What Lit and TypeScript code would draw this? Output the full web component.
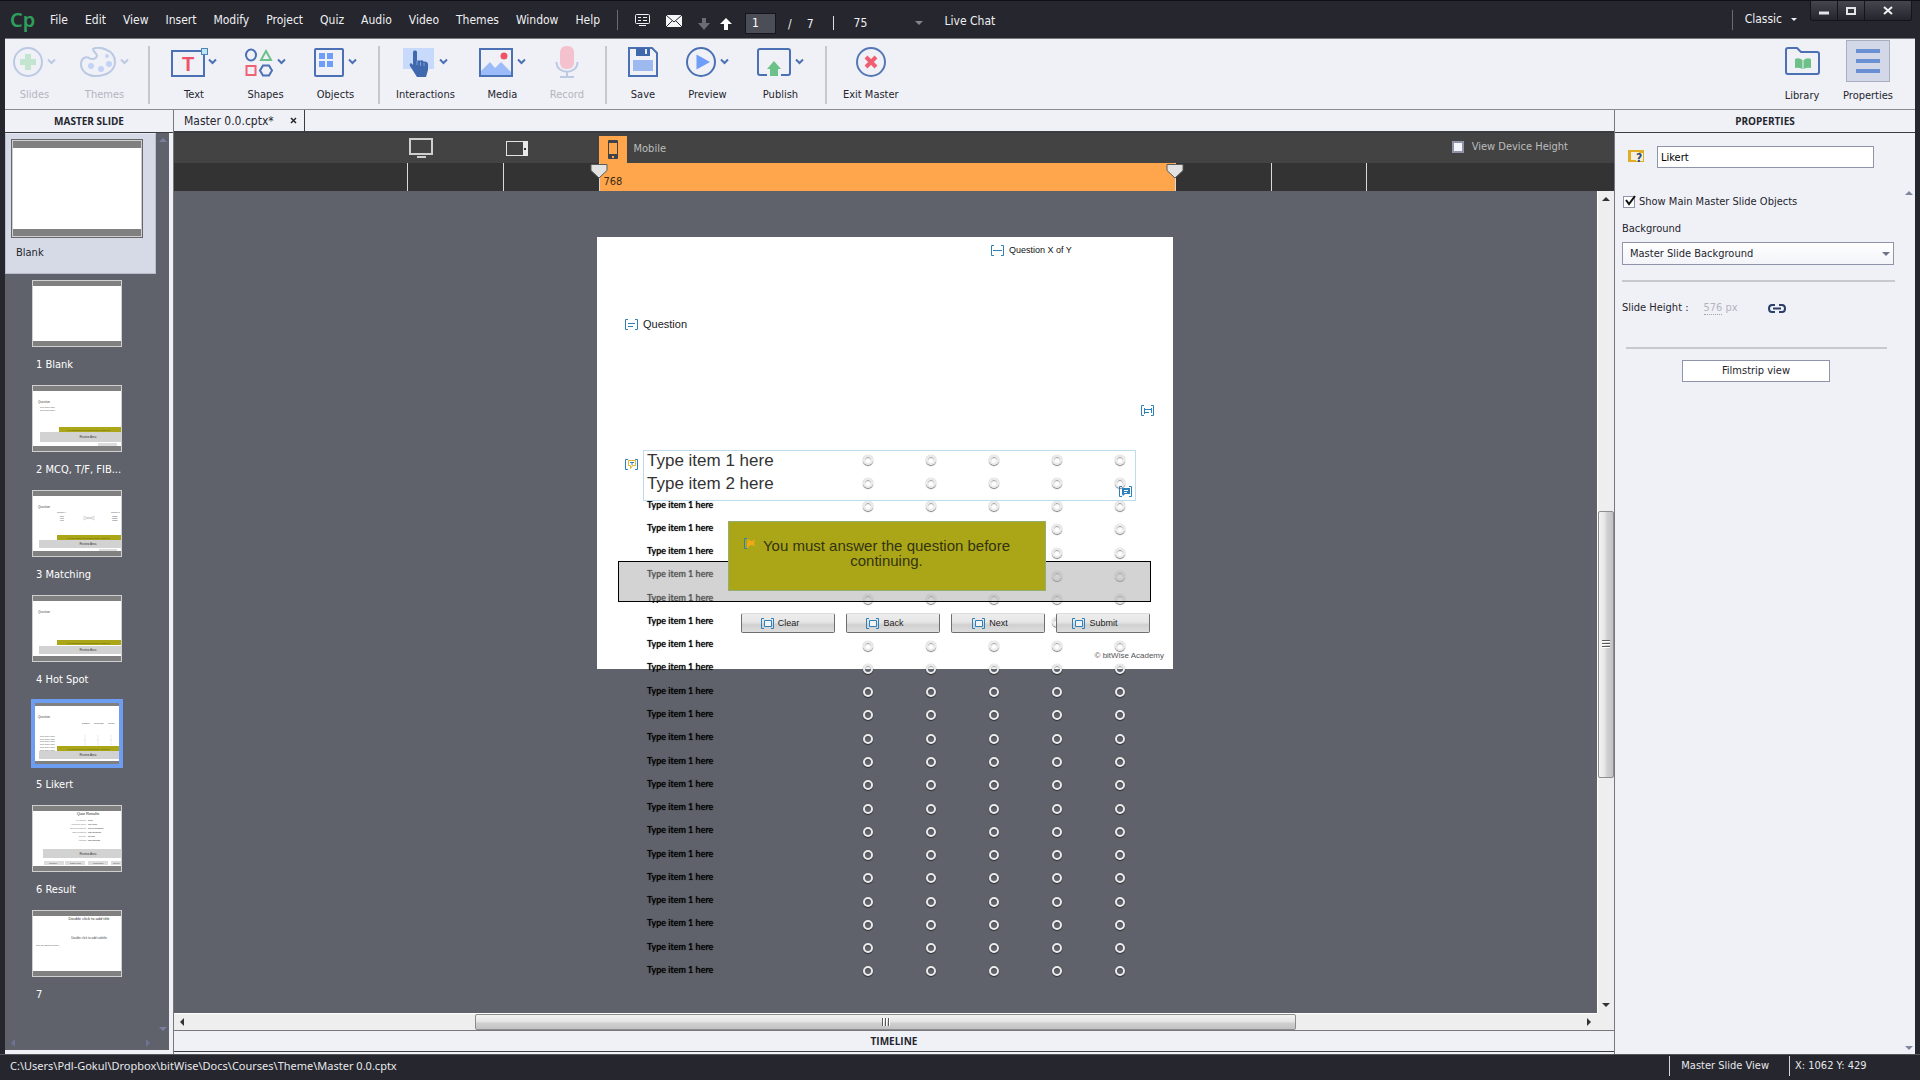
import { LitElement, html, css, svg, nothing } from "lit";
import { customElement, property } from "lit/decorators.js";
import { classMap } from "lit/directives/class-map.js";

const menus = ["File", "Edit", "View", "Insert", "Modify", "Project", "Quiz", "Audio", "Video", "Themes", "Window", "Help"];

const toolIcons: Record<string, unknown> = {
  Slides: html`<svg width="30" height="30" viewBox="0 0 30 30"><circle cx="15" cy="15" r="14" fill="none" stroke="#bcc9e3" stroke-width="2"/><path d="M12 7h6v5h5v6h-5v5h-6v-5H7v-6h5z" fill="#c3e4cf"/></svg>`,
  Themes: html`<svg width="36" height="30" viewBox="0 0 36 30"><path d="M13 2C18-1 35 2 35 15c0 9-9 14-19 14C7 29 1 24 1 17c0-5 4-8 8-6 3 2 7 1 8-2 0-3-4-4-4-7z" fill="none" stroke="#bcc9e3" stroke-width="2"/><circle cx="11" cy="19" r="3" fill="#c2d3f7"/><circle cx="21" cy="22" r="3" fill="#c2d3f7"/><circle cx="29" cy="17" r="3" fill="#c2d3f7"/><circle cx="27" cy="9" r="2" fill="#c2d3f7"/></svg>`,
  Text: html`<svg width="33" height="30" viewBox="0 0 33 30" overflow="visible"><rect x="1" y="4" width="32" height="25" fill="none" stroke="#4b70b3" stroke-width="2"/><rect x="30.500" y="1.500" width="6" height="6" fill="#bfe4f4" stroke="#4f86b4"/><text x="17" y="24" text-anchor="middle" font-family="Liberation Sans" font-weight="700" font-size="20" fill="#ee5468">T</text></svg>`,
  Shapes: html`<svg width="28" height="30" viewBox="0 0 28 30" fill="none" stroke-width="2"><ellipse cx="6" cy="8" rx="5" ry="5.500" stroke="#4b70b3"/><path d="M21 4l5 9H16z" stroke="#6cc188"/><rect x="1.500" y="19" width="9" height="9" stroke="#ee6274"/><path d="M18 18.500h6l3 5-3 5h-6l-3-5z" stroke="#4b70b3"/></svg>`,
  Objects: html`<svg width="30" height="30" viewBox="0 0 30 30"><rect x="1" y="2" width="28" height="27" rx="1" fill="none" stroke="#4b70b3" stroke-width="2"/><path d="M5 6h6v6H5zM13 6h6v6h-6zM5 14h6v6H5zM13 14h6v6h-6z" fill="#6f9dfa"/></svg>`,
  Interactions: html`<svg width="32" height="30" viewBox="0 0 32 30"><path d="M0 1h31v21H0z" fill="#c8dafb"/><path d="M10 5c0-2 4-2 4 0v9c1-1 3-1 3 0 1-1 3-1 4 1 1-1 4 0 4 2v6l-2 7H14l-7-11c-1-3 1-4 3-1z" fill="#4069ad"/><path d="M14 14v4M17.500 15v4M21 16v3" stroke="#7fa0d8"/></svg>`,
  Media: html`<svg width="34" height="30" viewBox="0 0 34 30"><rect x="1" y="2" width="32" height="27" fill="#f0f1f7" stroke="#4b70b3" stroke-width="2"/><path d="M2 24l9-9 5 6 6-6 10 10v3H2z" fill="#9bbcf8"/><circle cx="25" cy="9" r="3.500" fill="#ee5468"/></svg>`,
  Record: html`<svg width="24" height="32" viewBox="0 0 24 32"><rect x="5" y="0" width="14" height="23" rx="6" fill="#f3c2ce"/><path d="M1.500 16c0 13 21 13 21 0M12 26v5M5 31h14" fill="none" stroke="#bcc9e3" stroke-width="2"/></svg>`,
  Save: html`<svg width="30" height="30" viewBox="0 0 30 30"><path d="M1 1h23l5 5v23H1z" fill="#f0f1f7" stroke="#4b70b3" stroke-width="2"/><path d="M8 1h14v8H8z" fill="#4069ad"/><path d="M17 2h2v5h-2z" fill="#e6ebf7"/><path d="M5 13h20v11H5z" fill="#9eb9f0"/></svg>`,
  Preview: html`<svg width="30" height="30" viewBox="0 0 30 30"><circle cx="15" cy="15" r="14" fill="none" stroke="#4b70b3" stroke-width="2"/><path d="M10.500 7.500L24 15l-13.500 7.500z" fill="#6f9dfa"/></svg>`,
  Publish: html`<svg width="34" height="30" viewBox="0 0 34 30"><path d="M10 28H3q-2 0-2-2V4q0-2 2-2h28q2 0 2 2v22q0 2-2 2h-7" fill="none" stroke="#4b70b3" stroke-width="2"/><path d="M17 14l7 8h-3v7h-8v-7h-3z" fill="#6cc188"/></svg>`,
  "Exit Master": html`<svg width="30" height="30" viewBox="0 0 30 30"><circle cx="15" cy="15" r="14" fill="none" stroke="#5577b6" stroke-width="2"/><path d="M10 10l10 10M20 10L10 20" stroke="#ee5f72" stroke-width="4"/></svg>`,
  Library: html`<svg width="35" height="30" viewBox="0 0 35 30"><path d="M1 26V4q0-2 2-2h9l4 4h16q2 0 2 2v18q0 2-2 2H3q-2 0-2-2z" fill="#f0f1f7" stroke="#4b70b3" stroke-width="2"/><path d="M10 13q4-2 7.500 1v9q-4-2-7.500-1zM26 13q-4-2-7.500 1v9q4-2 7.500-1z" fill="#6cc188"/></svg>`,
  Properties: html`<svg width="24" height="30" viewBox="0 0 24 30"><path d="M0 5h24M0 15h24M0 25h24" stroke="#6a8fd3" stroke-width="4"/></svg>`,
};

interface Tool { name: string; menu?: boolean; off?: boolean; }
const groups: { tight?: boolean; tools: Tool[] }[] = [
  { tight: true, tools: [{ name: "Slides", menu: true, off: true }, { name: "Themes", menu: true, off: true }] },
  { tools: [{ name: "Text", menu: true }, { name: "Shapes", menu: true }, { name: "Objects", menu: true }] },
  { tight: true, tools: [{ name: "Interactions", menu: true }, { name: "Media", menu: true }, { name: "Record", off: true }] },
  { tools: [{ name: "Save" }, { name: "Preview", menu: true }, { name: "Publish", menu: true }] },
  { tight: true, tools: [{ name: "Exit Master" }] },
];

const tiny = (x: number, y: number, t: string, size = 3, fill = "#444", anchor = "start") =>
  svg`<text x=${x} y=${y} font-size=${size} fill=${fill} text-anchor=${anchor}>${t}</text>`;
const question = tiny(5, 17, "Question", 3);
const feedback = (x: number, y: number) =>
  svg`<rect x=${x} y=${y} width=${88 - x} height="5" fill="#aaa618"/>${tiny(34, y + 3.5, "You must answer the question before continuing", 2, "#5c5a10")}`;
const review = (x: number, y: number, h: number) =>
  svg`<rect x=${x} y=${y} width=${88 - x} height=${h} fill="#d2d2d2"/>${tiny(55, y + h / 2 + 1, "Review Area", 3, "#333", "middle")}`;

const thumbs: { name: string; art: unknown }[] = [
  { name: "1 Blank", art: nothing },
  { name: "2 MCQ, T/F, FIB...", art: svg`${question}${tiny(7, 22, "Type item 1 here", 2)}${tiny(7, 25, "Type item 2 here", 2)}${feedback(26, 41)}${review(7, 46, 10)}<rect x="65" y="57" width="19" height="3" fill="#ddd"/>` },
  { name: "3 Matching", art: svg`${question}${tiny(24, 22, "Column 1", 2)}${tiny(78, 22, "Column 2", 2)}${[26, 28, 30].map((y) => svg`${tiny(27, y, "Item", 2)}${tiny(79, y, "Match", 2)}`)}<path d="M50 25l12 4M50 29l12-4M50 27h12" stroke="#bbb" stroke-width=".5"/>${feedback(24, 44)}${review(6, 49, 8)}<rect x="66" y="58" width="18" height="2" fill="#ddd"/>` },
  { name: "4 Hot Spot", art: svg`${question}${feedback(24, 44)}${review(6, 50, 8)}` },
  { name: "5 Likert", art: svg`${question}${tiny(49, 23, "Disagree", 2)}${tiny(61, 23, "Somewhat", 2)}${tiny(75, 23, "Neutral", 2)}${[36, 39, 41, 44, 47, 50].map((y) => svg`${tiny(7, y, "Type item 1 here", 2)}${[52, 65, 78].map((x) => svg`<circle cx=${x} cy=${y - 1} r=".5" fill="#bbb"/>`)}`)}${feedback(24, 45)}${review(6, 50, 8)}` },
  { name: "6 Result", art: svg`${tiny(55, 9, "Quiz Results", 4, "#222", "middle")}${["You Scored", "Maximum Score", "Correct Questions", "Total Questions", "Accuracy", "Attempts"].map((t, i) => svg`${tiny(53, 15 + i * 4, t, 2, "#777", "end")}${tiny(55, 15 + i * 4, ["score", "max-score", "correct-questions", "total-questions", "percent", "total-attempts"][i], 2, "#222")}`)}${review(10, 43, 9)}${[11, 32, 55, 78].map((x, i) => svg`<rect x=${x} y="55" width="20" height="4" fill="#ddd"/>${tiny([16, 37, 60, 80][i], 58, ["Continue", "Retake Quiz", "Post Result", "Review"][i], 2)}`)}` },
  { name: "7", art: svg`${tiny(56, 9, "Double click to add title", 4, "#333", "middle")}${tiny(56, 28, "Double click to add subtitle", 3, "#444", "middle")}${tiny(3, 35, "Type the caption text here", 2)}` },
];

/* Bracketed badge that marks an object placed on a master slide. */
const mark = (kind: string) => {
  const blue = "#2f80b9";
  const inner: Record<string, unknown> = {
    text: svg`<path d="M4 4.500h7M4 7.500h5" stroke=${blue}/>`,
    line: svg`<path d="M3 5.500h9" stroke=${blue}/>`,
    side: svg`<path d="M4.500 3v6M4 4.500h7M4 7.500h5M11.500 3v5" stroke=${blue}/>`,
    note: svg`<path d="M4 2h8v6H7l-2 2-1-2z" fill=${blue}/><path d="M6 4.500h4M6 6.500h3" stroke="#fff"/>`,
    button: svg`<path d="M4.500 2.500h7v6h-7z" fill="#eef4f8" stroke=${blue}/>`,
    item: svg`<path d="M4.500 1.500h7v5h-3l-2 3v-3h-2z" fill="none" stroke="#e0b32c"/><path d="M6 3.500h4M8 4v2" stroke=${blue}/>`,
    star: svg`<path d="M5 1l3 2 4-1-1 3 1 3-4-1-4 3V5z" fill="#f0a818"/>`,
  };
  return html`<svg class="mark" width="14" height="11" viewBox="0 0 14 11" fill="none" aria-hidden="true"><path d=${kind === "star" ? "M4 .5H1.500v10H4" : "M4 .5H1.500v10H4M11 .5h2.500v10H11"} stroke=${blue}/>${inner[kind]}</svg>`;
};

const arrow = (dir: "up" | "down" | "left" | "right", fill: string) => {
  const d = { up: "M0 6l4-4 4 4z", down: "M0 2l4 4 4-4z", left: "M6 0L2 4l4 4z", right: "M2 0l4 4-4 4z" }[dir];
  return html`<svg class="arrow" width="8" height="8" viewBox="0 0 8 8" aria-hidden="true"><path d=${d} fill=${fill}/></svg>`;
};

const base = css`
  :host { display: block; box-sizing: border-box; }
  *, *::before, *::after { box-sizing: border-box; }
  button, input, select { font: inherit; color: inherit; margin: 0; padding: 0; border: 0; border-radius: 0; background: none; }
  svg { display: block; flex: none; }
`;

@customElement("cp-slide")
export class CpSlide extends LitElement {
  static styles = [base, css`
    :host { position: relative; width: 576px; height: 432px; background: #fff; font-family: "Liberation Sans", Arial, sans-serif; font-size: 9px; line-height: 12px; color: #333; flex: none; }
    .obj { position: absolute; display: flex; align-items: center; gap: 5px; }
    .counter { left: 393px; top: 7px; color: #111; }
    .question { left: 27px; top: 81px; font-size: 11px; color: #222; }
    .side { left: 543px; top: 168px; }
    .itemmark { left: 27px; top: 222px; }
    .answers { position: absolute; left: 50px; top: 211px; width: 484px; height: 535px; margin: 0; padding: 0; border: 0; min-width: 0; display: grid; grid-auto-rows: 1fr; }
    .row { display: grid; grid-template-columns: 189px repeat(5, 63px); align-items: center; min-height: 0; }
    .name { font-family: Lato, "Liberation Sans", sans-serif; font-size: 9px; line-height: 12px; color: #000; text-shadow: 0 0 1px #000; padding-bottom: 3px; }
    .name.big { font-family: "Liberation Sans", Arial, sans-serif; font-size: 17px; line-height: 20px; color: #333; text-shadow: none; padding: 3px 0 0; }
    .radio { appearance: none; width: 10px; height: 10px; border: 2px solid #eaeaea; border-radius: 50%; justify-self: center; box-shadow: 0 1px 1px rgba(0, 0, 0, .5), 0 0 1px rgba(0, 0, 0, .4), inset 0 1px 1px rgba(0, 0, 0, .4); }
    .itembox { left: 46px; top: 213px; width: 493px; height: 51px; border: 1px solid #bfdcee; pointer-events: none; }
    .notemark { left: 521px; top: 249px; }
    .review { left: 21px; top: 324px; width: 533px; height: 41px; border: 1px solid #000; background: rgba(167, 167, 167, .5); }
    .caption { left: 131px; top: 284px; width: 318px; height: 70px; background: #aaa618; border: 1px solid #93ae72; justify-content: center; align-items: flex-start; padding: 16px 20px 0 0; gap: 5px; }
    .message { width: 250px; margin: 0; font-size: 15px; line-height: 15px; text-align: center; color: #34330f; }
    .buttons { left: 144px; top: 376px; gap: 11px; }
    .nav { width: 94px; height: 20px; display: flex; align-items: center; justify-content: center; gap: 4px; padding-right: 17px; border: 1px solid #6f6f6f; border-top-color: transparent; border-radius: 2px; background: linear-gradient(#ededed 0, #e6e6e6 45%, #d0d0d0 60%, #dedede); color: #222; }
    .copyright { right: 9px; top: 413px; font-size: 8px; color: #555; }
  `];

  render() {
    return html`
      <div class="obj counter">${mark("line")}<span>Question X of Y</span></div>
      <div class="obj question">${mark("text")}<span>Question</span></div>
      <div class="obj side">${mark("side")}</div>
      <div class="obj itemmark">${mark("item")}</div>
      <fieldset class="answers" aria-label="Likert items">
        ${Array.from({ length: 23 }, (_, i) => {
          const label = `Type item ${i === 1 ? 2 : 1} here`;
          return html`<div class="row"><span class=${classMap({ name: true, big: i < 2 })}>${label}</span>
            ${[1, 2, 3, 4, 5].map((n) => html`<input class="radio" type="radio" name=${`row${i}`} value=${n} aria-label=${`${label}, option ${n}`}>`)}</div>`;
        })}
      </fieldset>
      <div class="obj itembox"></div>
      <div class="obj notemark">${mark("note")}</div>
      <div class="obj review"></div>
      <div class="obj caption">${mark("star")}<p class="message">You must answer the question before continuing.</p></div>
      <div class="obj copyright">© bitWise Academy</div>
      <div class="obj buttons">
        ${["Clear", "Back", "Next", "Submit"].map((t) => html`<button class="nav">${mark("button")}<span>${t}</span></button>`)}
      </div>`;
  }
}

@customElement("cp-scrollbar")
export class CpScrollbar extends LitElement {
  @property({ reflect: true }) axis: "x" | "y" = "x";
  @property({ type: Number }) before = 1;
  @property({ type: Number }) size = 1;
  @property({ type: Number }) after = 1;

  static styles = [base, css`
    :host { display: flex; align-items: stretch; background: #eeeeef; }
    :host([axis="y"]) { flex-direction: column; width: 17px; border-left: 1px solid #fff; }
    :host([axis="x"]) { height: 17px; border-top: 1px solid #fff; }
    .end { display: flex; align-items: center; justify-content: center; width: 16px; height: 16px; flex: none; }
    .gap, .thumb { flex-basis: 0; min-width: 0; min-height: 0; }
    .thumb { display: flex; align-items: center; justify-content: center; gap: 1px; border: 1px solid #8d8d90; border-radius: 2px; }
    :host([axis="x"]) .thumb { background: linear-gradient(#f3f3f3 0, #e6e6e7 45%, #cfcfd0 60%, #c2c2c4); }
    :host([axis="y"]) .thumb { flex-direction: column; background: linear-gradient(90deg, #f3f3f3 0, #e6e6e7 40%, #cfcfd0 60%, #c2c2c4); }
    .grip { background: #5a5a5c; width: 2px; height: 8px; border-right: 1px solid #fff; }
    :host([axis="y"]) .grip { width: 8px; height: 2px; border-right: 0; border-bottom: 1px solid #fff; }
  `];

  render() {
    const y = this.axis === "y";
    return html`
      <div class="end">${arrow(y ? "up" : "left", "#333")}</div>
      <div class="gap" style=${`flex-grow:${this.before}`}></div>
      <div class="thumb" style=${`flex-grow:${this.size}`}><i class="grip"></i><i class="grip"></i><i class="grip"></i></div>
      <div class="gap" style=${`flex-grow:${this.after}`}></div>
      <div class="end">${arrow(y ? "down" : "right", "#333")}</div>`;
  }
}

@customElement("app-root")
export class AppRoot extends LitElement {
  static styles = [base, css`
    :host { display: flex; flex-direction: column; min-height: 100vh; height: 100vh; overflow: hidden; background: #25262e; border-top: 1px solid #101116; font-family: "DejaVu Sans Condensed", "Noto Sans", sans-serif; font-size: 11px; line-height: 16px; color: #24252d; }

    .titlebar { display: flex; align-items: center; height: 37px; flex: none; padding-left: 10px; color: #f0f0f2; font-size: 12px; }
    .logo { font-family: "Noto Sans", sans-serif; font-weight: 600; font-size: 20px; line-height: 28px; width: 40px; color: #2f9e5c; }
    .menus { display: flex; gap: 17px; }
    .rule { width: 1px; height: 20px; background: #6a6b72; }
    .quick { display: flex; align-items: center; margin-left: 17px; }
    .quick .rule { margin-right: 17px; }
    .icons { display: flex; align-items: center; gap: 16px; padding-top: 2px; }
    .steps { display: flex; gap: 10px; padding-top: 2px; }
    .page { width: 31px; height: 21px; margin: 7px 12px 0 13px; padding: 0 6px; background: #4b4d57; border: 1px solid #15161b; color: #fff; }
    .of { display: flex; gap: 15px; padding-top: 8px; }
    .zoom { display: flex; align-items: center; justify-content: space-between; width: 90px; margin: 7px 22px 0 19px; padding-left: 20px; border-left: 1px solid #ddd; line-height: 14px; }
    .chat { padding-top: 3px; }
    .right { display: flex; align-self: stretch; margin-left: auto; padding-right: 8px; }
    .right .rule { margin-top: 9px; }
    .mode { display: flex; align-items: center; align-self: flex-start; gap: 8px; margin: 10px 12px 0 12px; }
    .win { display: flex; align-self: flex-start; border: 1px solid #14151a; border-top: 0; border-radius: 0 0 3px 3px; background: linear-gradient(#44464e, #25262c); }
    .win button { display: flex; align-items: center; justify-content: center; width: 27px; height: 19px; border-right: 1px solid #14151a; }
    .win button.close { width: 46px; border-right: 0; }

    .toolbar { display: flex; height: 72px; flex: none; margin: 0 5px; background: #f0f1f7; border-top: 1px solid #77787c; border-bottom: 1px solid #8a8b90; }
    .group { display: flex; gap: 28px; padding: 7px 22px 0 22px; position: relative; }
    .group + .group::before { content: ""; width: 2px; height: 58px; background: #c7c8ce; position: absolute; left: -1px; top: 7px; }
    .group.tight { padding-left: 17px; gap: 24px; }
    .group:first-child { padding-left: 8px; padding-right: 20px; }
    .tool { display: flex; flex-direction: column; align-items: center; gap: 10px; }
    .pic { display: flex; align-items: center; gap: 4px; height: 31px; }
    .off { color: #b3b5be; }
    .panels { display: flex; gap: 19px; margin-left: auto; padding: 1px 22px 0 0; }
    .panels .tool { gap: 6px; }
    .panels .pic { width: 44px; height: 42px; justify-content: center; }
    .panels .on .pic { background: #d3d8e8; border: 1px solid #a9adc0; }

    .work { display: grid; grid-template-columns: 169px minmax(0, 1fr) 301px; grid-template-rows: minmax(0, 1fr); flex: 1; min-height: 0; margin: 0 5px; background: #f0f1f7; }
    .head { margin: 0; height: 23px; flex: none; display: flex; align-items: center; justify-content: center; font-family: "Open Sans", "Noto Sans", sans-serif; font-size: 10px; line-height: 16px; font-weight: 700; border-bottom: 1px solid #3b3c42; padding-bottom: 1px; }

    .left { display: flex; flex-direction: column; min-height: 0; border-right: 1px solid #77787c; }
    .film { flex: 1; min-height: 0; display: grid; grid-template-columns: minmax(0, 1fr) 13px; grid-template-rows: minmax(0, 1fr) 14px; margin: 0 4px 4px 0; background: #5f626a; }
    .slides { list-style: none; margin: 0; padding: 0; overflow: hidden; color: #fff; }
    .main { height: 141px; padding: 5px; margin-bottom: 6px; background: #d6dae6; border: 1px solid #b9bdcb; border-top-color: #e6e9f2; color: #24252d; }
    .cover { height: 99px; width: 132px; border: 1px solid #66676b; padding: 1px; background: #cfcfcf; }
    .paper { height: 100%; background: #fff; border: solid #808080; border-width: 7px 0; }
    .caption { padding: 7px 0 0 5px; }
    .slide { height: 105px; padding-left: 27px; }
    .thumb { width: 90px; height: 67px; background: #fff; border: 1px solid #cfcfcf; overflow: hidden; font-family: "Liberation Sans", sans-serif; }
    .slide .caption { padding: 10px 0 0 4px; }
    .slide.on .thumb { outline: 1px solid #6d9df0; border: 3px solid #6d9df0; }
    .slide.on .thumb svg { margin: -2px; }
    .vbar { display: flex; flex-direction: column; align-items: center; justify-content: space-between; padding: 3px 0; }
    .hbar { display: flex; justify-content: space-between; align-items: center; padding: 0 4px; }

    .doc { display: flex; flex-direction: column; min-width: 0; min-height: 0; }
    .tabs { height: 23px; flex: none; border-bottom: 2px solid #3b3c42; display: flex; }
    .tab { display: flex; align-items: center; gap: 16px; padding: 0 7px 0 10px; border-right: 1px solid #3b3c42; font-size: 12px; }
    .devices { display: grid; grid-template-columns: minmax(0, 1fr) 960px minmax(0, 1fr); height: 30px; flex: none; padding-right: 15px; background: #434343; color: #bdbdbd; }
    .segs { display: grid; grid-template-columns: 96px 96px 576px 96px 96px; }
    .seg { display: flex; align-items: center; padding-left: 2px; }
    .seg.active { padding: 3px 0 0; gap: 7px; }
    .dev { width: 28px; height: 27px; display: flex; align-items: center; justify-content: center; background: #ffa64d; }
    .devname { padding-bottom: 2px; }
    .height { display: flex; align-items: center; justify-content: flex-end; gap: 8px; padding: 0 31px 3px 0; }
    .check { appearance: none; width: 12px; height: 12px; border: 2px solid #8f94a8; background: #f4f5fa; }
    .ruler { display: flex; justify-content: center; height: 28px; flex: none; padding-right: 15px; background: #333; }
    .tick { border-left: 1px solid #d9d9d9; }
    .tick:last-child { border-right: 1px solid #d9d9d9; }
    .range { position: relative; background: #ffa64d; color: #3a2a12; padding: 11px 0 0 4px; border-left: 1px solid #d9d9d9; }
    .handle { position: absolute; top: 1px; left: -10px; }
    .handle.end { left: auto; right: -9px; }
    .view { display: grid; grid-template-columns: minmax(0, 1fr) 17px; grid-template-rows: minmax(0, 1fr) 17px; flex: 1; min-height: 0; background: #eeeeef; }
    .canvas { display: flex; justify-content: center; align-items: flex-start; padding: 46px 1px 0 0; overflow: hidden; background: #5f626a; }
    .timeline { margin: 0 0 2px; height: 22px; flex: none; display: flex; align-items: center; justify-content: center; border: solid #77787c; border-width: 1px 0 0; border-bottom: 1px solid #3b3c42; font-family: "Open Sans", "Noto Sans", sans-serif; font-size: 10px; font-weight: 700; }

    .props { display: flex; flex-direction: column; border-left: 1px solid #77787c; min-height: 0; }
    .form { flex: 1; display: flex; flex-direction: column; padding: 13px 2px 2px 7px; }
    .named { display: flex; align-items: center; gap: 13px; padding-left: 6px; margin-bottom: 18px; }
    .field { width: 217px; height: 22px; padding: 0 3px; background: #fff; border: 1px solid #8f94a8; color: #000; }
    .showall { display: flex; align-items: flex-end; gap: 4px; height: 24px; padding-left: 1px; }
    .tick-box { position: relative; display: flex; padding-bottom: 2px; }
    .showall .check { border-width: 1px; background: #fff; }
    .tick-box svg { position: absolute; left: 1px; top: -1px; pointer-events: none; }
    .spacer { margin-left: auto; align-self: flex-start; padding-top: 3px; }
    .label { margin: 11px 0 5px; }
    .select { position: relative; width: 272px; height: 23px; }
    .select select { appearance: none; width: 100%; height: 100%; padding: 0 7px; border: 1px solid #8f94a8; background: linear-gradient(#fff, #f3f4f9); }
    .select svg { position: absolute; right: 4px; top: 8px; pointer-events: none; }
    .line { width: 273px; height: 2px; margin: 15px 0 18px; border: 0; background: #c7c8d0; }
    .size { display: flex; align-items: center; }
    .px { margin: 0 30px 0 15px; color: #b3b5be; }
    .px u { text-decoration: none; border-bottom: 1px dotted #a0a2ac; }
    .line.short { width: 261px; margin: 31px 4px 11px; }
    .film-btn { width: 148px; height: 22px; margin-left: 60px; background: #fff; border: 1px solid #8f94a8; }
    .foot { margin-top: auto; align-self: flex-end; }

    .status { display: flex; align-items: center; height: 26px; flex: none; padding: 0 5px 3px 10px; margin: 0; color: #e8e8ea; font-size: 11px; border-top: 1px solid #55565c; }
    .cell { height: 20px; line-height: 20px; border-left: 1px solid #d5d5d8; padding: 0 20px 0 11px; }
    .status .path { margin-right: auto; font-family: "Noto Sans", sans-serif; }
    .cell.pos { width: 126px; padding: 0 0 0 5px; }
  `];

  private chevron(off?: boolean) {
    return html`<svg width="9" height="7" viewBox="0 0 9 7" aria-hidden="true"><path d="M1 1.500l3.500 3.500L8 1.500" fill="none" stroke=${off ? "#bcc9e3" : "#4b70b3"} stroke-width="2"/></svg>`;
  }

  private tool(t: Tool, on = false) {
    return html`<button class=${classMap({ tool: true, off: !!t.off, on })} ?disabled=${t.off}>
      <span class="pic">${toolIcons[t.name]}${t.menu ? this.chevron(t.off) : nothing}</span><span>${t.name}</span></button>`;
  }

  private titlebar() {
    return html`<header class="titlebar">
      <span class="logo">Cp</span>
      <nav class="menus">${menus.map((m) => html`<button>${m}</button>`)}</nav>
      <div class="quick">
        <span class="rule"></span>
        <div class="icons">
          <svg width="15" height="13" viewBox="0 0 15 13"><rect x=".500" y=".500" width="14" height="9" rx="1" fill="none" stroke="#f0f0f2"/><path d="M3 3.500h3M8 3.500h4M3 6.500h3M8 6.500h4M4 11.500h7" stroke="#f0f0f2"/></svg>
          <svg width="16" height="12" viewBox="0 0 16 12"><path d="M0 0h16v12H0z" fill="#f6f6f8"/><path d="M0 0l8 7 8-7M0 12l6-6M16 12l-6-6" fill="none" stroke="#25262e"/></svg>
          <span class="steps">
            <svg width="12" height="18" viewBox="0 0 12 18"><path d="M4 5h4v5h4l-6 7-6-7h4z" fill="#6c6d73"/></svg>
            <svg width="12" height="18" viewBox="0 0 12 18"><path d="M4 17h4v-6h4L6 5l-6 6h4z" fill="#fff"/></svg>
          </span>
        </div>
        <input class="page" aria-label="Slide" value="1">
        <span class="of"><span>/</span><span>7</span></span>
        <button class="zoom" aria-label="Zoom 75"><span>75</span>${arrow("down", "#84858c")}</button>
        <button class="chat">Live Chat</button>
      </div>
      <div class="right">
        <span class="rule"></span>
        <button class="mode"><span>Classic</span><svg width="8" height="8" viewBox="0 0 8 8"><path d="M1 3h6L4 6z" fill="#f0f0f2"/></svg></button>
        <div class="win">
          <button aria-label="Minimize"><svg width="10" height="10" viewBox="0 0 10 10"><path d="M0 5.500h10v3H0z" fill="#e4e5e8"/></svg></button>
          <button aria-label="Maximize"><svg width="10" height="10" viewBox="0 0 10 10"><rect x="1" y="2" width="8" height="6" fill="none" stroke="#e4e5e8" stroke-width="2"/></svg></button>
          <button class="close" aria-label="Close"><svg width="10" height="10" viewBox="0 0 10 10"><path d="M1 1l8 7M9 1L1 8" stroke="#f0f0f2" stroke-width="2"/></svg></button>
        </div>
      </div>
    </header>`;
  }

  private filmstrip() {
    return html`<aside class="left">
      <h2 class="head">MASTER SLIDE</h2>
      <div class="film">
        <ol class="slides">
          <li class="main"><div class="cover"><div class="paper"></div></div><div class="caption">Blank</div></li>
          ${thumbs.map((t, i) => html`<li class=${classMap({ slide: true, on: i === 4 })}>
            <div class="thumb"><svg width="88" height="65" viewBox="0 0 88 65" aria-hidden="true"><path d="M0 0h88v65H0z" fill="#fff"/>${t.art}<path d="M0 0h88v5H0zM0 60h88v5H0z" fill="#808080"/></svg></div>
            <div class="caption">${t.name}</div></li>`)}
        </ol>
        <div class="vbar">${arrow("up", "#7a7fa0")}${arrow("down", "#7a7fa0")}</div>
        <div class="hbar">${arrow("left", "#6d7394")}${arrow("right", "#6d7394")}</div>
      </div>
    </aside>`;
  }

  private document() {
    const pin = svg`<path d="M1 .5h16v6l-8 7.500-8-7.500z" fill="#e2e2e2" stroke="#5a5a5a"/>`;
    return html`<main class="doc">
      <div class="tabs"><div class="tab"><span>Master 0.0.cptx*</span><button aria-label="Close tab"><svg width="7" height="7" viewBox="0 0 7 7"><path d="M1 1l5 5M6 1L1 6" stroke="#24252d" stroke-width="1.500"/></svg></button></div></div>
      <div class="devices">
        <span></span>
        <div class="segs">
          <div class="seg"><svg width="24" height="20" viewBox="0 0 24 20"><rect x="1" y="1" width="22" height="15" fill="none" stroke="#cfcfcf" stroke-width="2"/><path d="M8 19h9" stroke="#cfcfcf" stroke-width="2"/></svg></div>
          <div class="seg"><svg width="23" height="15" viewBox="0 0 23 15"><rect x="1.500" y=".500" width="21" height="14" fill="#434343" stroke="#e4e4e4"/><path d="M18 0h5v15h-5z" fill="#e9e9e9"/><path d="M19 7h2v2h-2z" fill="#333"/></svg></div>
          <div class="seg active"><span class="dev"><svg width="10" height="19" viewBox="0 0 10 19"><rect width="10" height="19" rx="1" fill="#3f424a"/><path d="M1 3h8v11H1z" fill="#ffa64d"/><path d="M4 16h2v2H4z" fill="#ffa64d"/></svg></span><span class="devname">Mobile</span></div>
        </div>
        <label class="height"><input type="checkbox" class="check">View Device Height</label>
      </div>
      <div class="ruler"><div class="segs">
        <div class="tick"></div><div class="tick"></div>
        <div class="range">768<svg class="handle" width="18" height="15" viewBox="0 0 18 15">${pin}</svg><svg class="handle end" width="18" height="15" viewBox="0 0 18 15">${pin}</svg></div>
        <div class="tick"></div><div class="tick"></div>
      </div></div>
      <div class="view">
        <div class="canvas"><cp-slide></cp-slide></div>
        <cp-scrollbar axis="y" before="304" size="266" after="219"></cp-scrollbar>
        <cp-scrollbar axis="x" before="285" size="821" after="285"></cp-scrollbar>
      </div>
      <h2 class="timeline">TIMELINE</h2>
    </main>`;
  }

  private properties() {
    return html`<aside class="props">
      <h2 class="head">PROPERTIES</h2>
      <div class="form">
        <div class="named">
          <svg width="16" height="16" viewBox="0 0 16 16"><path d="M0 1h16v12H0z" fill="#e0ad24"/><path d="M3 3h8v8H3zM8 4h7v8H8z" fill="#f3f0e2"/><text x="8" y="13" font-size="12" font-weight="700" fill="#2f4a70">?</text></svg>
          <input class="field" aria-label="Slide name" value="Likert">
        </div>
        <div class="showall">
          <span class="tick-box"><input id="showall" type="checkbox" class="check" checked><svg width="13" height="12" viewBox="0 0 13 12"><path d="M2 5l3 4 6-8" fill="none" stroke="#111" stroke-width="2"/></svg></span>
          <label for="showall">Show Main Master Slide Objects</label>
          <span class="spacer">${arrow("up", "#8287a0")}</span>
        </div>
        <label class="label" for="bg">Background</label>
        <div class="select"><select id="bg"><option>Master Slide Background</option></select>${arrow("down", "#6f7488")}</div>
        <hr class="line">
        <div class="size"><span>Slide Height :</span><span class="px"><u>576</u> px</span>
          <svg width="18" height="9" viewBox="0 0 18 9"><path d="M7 1H4Q1 1 1 4.500T4 8h3M11 1h3q3 0 3 3.500T14 8h-3M5 4.500h8" fill="none" stroke="#2c3f68" stroke-width="2"/></svg></div>
        <hr class="line short">
        <button class="film-btn">Filmstrip view</button>
        <span class="foot">${arrow("down", "#8287a0")}</span>
      </div>
    </aside>`;
  }

  render() {
    return html`
      ${this.titlebar()}
      <div class="toolbar">
        ${groups.map((g) => html`<div class=${classMap({ group: true, tight: !!g.tight })}>${g.tools.map((t) => this.tool(t))}</div>`)}
        <div class="panels">${this.tool({ name: "Library" })}${this.tool({ name: "Properties" }, true)}</div>
      </div>
      <div class="work">${this.filmstrip()}${this.document()}${this.properties()}</div>
      <footer class="status"><span class="path">C:\\Users\\Pdl-Gokul\\Dropbox\\bitWise\\Docs\\Courses\\Theme\\Master 0.0.cptx</span><span class="cell">Master Slide View</span><span class="cell pos">X: 1062 Y: 429</span></footer>`;
  }
}
